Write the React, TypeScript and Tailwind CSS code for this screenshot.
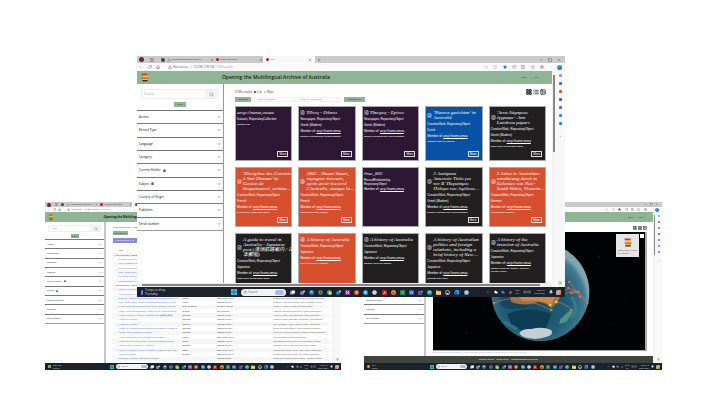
import React from "react";
import {
  ArrowLeft, RotateCw, Home, TriangleAlert, ChevronDown, Search, LayoutGrid, List, Image as ImageIcon,
  Settings, Star, BookOpen, Minus, Square, X, Plus, Columns2, ChevronUp, Cloud, Wifi, Volume2, Bell, FileText, Lock,
} from "lucide-react";

type Size = "lg" | "sm";

const filters = [
  "Access", "Record Type", "Language", "Category", "Current Holder", "Subject",
  "Country of Origin", "Publisher", "Serial number",
];

const taskApps: React.ReactNode[] = [
  <><rect x="0" y="3" width="7" height="6" fill="#9aa3ad" /><rect x="3" y="1" width="7" height="6" fill="#f1f3f5" /></>,
  <><circle cx="4" cy="6" r="4" fill="#7b83c9" /><circle cx="8" cy="3" r="2" fill="#dfe6ee" /></>,
  <><circle cx="5" cy="5" r="5" fill="#1f7fc4" /><path d="M2 5a3 3 0 0 1 6 0z" fill="#a6dcf2" /></>,
  <><circle cx="5" cy="5" r="4.5" fill="#808a92" /><circle cx="5" cy="5" r="2" fill="#333b43" /></>,
  <><circle cx="5" cy="5" r="5" fill="#43a85c" /><path d="M5 5L10 5A5 5 0 0 1 4 10z" fill="#efc342" /><circle cx="5" cy="5" r="2" fill="#d8e9f8" /></>,
  <><circle cx="4" cy="6" r="4" fill="#2a7fc0" /><circle cx="8" cy="3" r="2.5" fill="#9fc6a5" /></>,
  <><rect width="10" height="10" rx="1" fill="#8a35b5" /><path d="M3 8V2l4 6V2" stroke="#fff" fill="none" /></>,
  <><circle cx="5" cy="5" r="5" fill="#d65332" /><path d="M4 8V3h2a1 1 0 0 1 0 3H4" stroke="#fff" fill="none" /></>,
  <><circle cx="5" cy="5" r="5" fill="#1e9de0" /><path d="M7 3H4a1 1 0 0 0 0 2h2a1 1 0 0 1 0 2H3" stroke="#fff" fill="none" /></>,
  <><circle cx="5" cy="5" r="4.5" fill="#eceeec" /><circle cx="5" cy="5" r="2" fill="#a8b0ac" /></>,
  <><rect width="10" height="10" rx="1" fill="#c51616" /><path d="M2 8Q5 6 5 2Q5 6 8 7Q5 6 2 8" stroke="#fff" fill="none" /></>,
  <><circle cx="5" cy="5" r="5" fill="#f38a29" /><circle cx="5" cy="6" r="2.5" fill="#b5428d" /></>,
  <><rect width="10" height="10" rx="1" fill="#218650" /><path d="M3 3l4 4M7 3L3 7" stroke="#d9f2e3" /></>,
  <><rect width="10" height="10" rx="1" fill="#2463b5" /><path d="M2 3l1 4 2-4 2 4 1-4" stroke="#fff" fill="none" /></>,
  <><rect y="2" width="8" height="8" rx="1" fill="#4f59b5" /><circle cx="8" cy="3" r="2" fill="#8087d9" /></>,
  <><circle cx="5" cy="5" r="5" fill="#1b9fc9" /><path d="M1 7A5 5 0 0 1 9 3Q10 6 6 6z" fill="#5bd58c" /></>,
  <><path d="M0 1h4l1 1h5v7H0z" fill="#f1c445" /><rect y="6" width="10" height="3" fill="#f9dc7c" /></>,
  <><circle cx="5" cy="5" r="4" fill="none" stroke="#d8dde0" strokeWidth="1.5" /><path d="M3 9V6h4v3" fill="#d8dde0" /></>,
  <><rect x="2" width="8" height="9" rx="1" fill="#2d9ae5" /><rect y="3" width="6" height="6" fill="#1563b0" /></>,
  <><circle cx="5" cy="5" r="5" fill="#7fa2d8" /><circle cx="5" cy="5" r="2.5" fill="#c9d9f0" /></>,
];

function Flag({ className }: { className: string }) {
  return (
    <svg viewBox="0 0 12 14" className={className} aria-hidden="true">
      <path d="M1 1h9v3H1z" fill="#c63a24" /><path d="M2 4h9v3H2z" fill="#f3ce3c" />
      <path d="M1 7h10v2H1z" fill="#d2452b" /><path d="M2 9h9v2H2z" fill="#f1c232" /><path d="M2 11h8v2H2z" fill="#29251d" />
    </svg>
  );
}

function TabStrip({ size }: { size: Size }) {
  const lg = size === "lg";
  const icon = lg ? "size-1 shrink-0" : "size-[3px] shrink-0";
  return (
    <div className={`flex items-center bg-[#cbcbcb] text-[2px] text-[#444] ${lg ? "h-[7px]" : "h-[5px]"}`}>
      <div className="flex w-[6.5%] items-center justify-between pl-[2px]">
        <span className={`rounded-full bg-[#6d2730] ${lg ? "size-[5px]" : "size-[4px]"}`} />
        <Columns2 className={icon} /><Square className={icon} fill="#333" />
      </div>
      <div className="flex w-[11.5%] items-center gap-px pl-[2px]">
        <TriangleAlert className={icon} color="#d9583b" />
        <span className="flex-1 truncate">{lg ? "transforming-workspc-staging-c…" : "transforming-workspc-st…"}</span><X className={icon} />
      </div>
      <div className="flex w-[11.5%] items-center gap-px pl-[2px]">
        <span className="size-[3px] shrink-0 rounded-full bg-[#a81e38]" />
        <span className="flex-1 truncate">Systemik Solutions</span><X className={icon} />
      </div>
      <div className="flex h-full w-[12%] items-center gap-[2px] bg-[#f8f8f8] px-[3px]">
        <span className="size-[3px] shrink-0 rounded-full bg-[#a81e38]" />
        <span className="flex-1">Dev</span><X className={icon} />
      </div>
      <Plus className={`ml-[2px] ${icon}`} />
      <div className="ml-auto flex w-[6%] items-center justify-between pr-[4px]">
        <Minus className={icon} /><Square className={icon} /><X className={icon} />
      </div>
    </div>
  );
}

function AddressBar({ size }: { size: Size }) {
  const lg = size === "lg";
  const icon = lg ? "size-1 shrink-0" : "size-[3px] shrink-0";
  return (
    <div className={`flex items-center bg-[#fafafa] text-[#555] ${lg ? "h-[8px] text-[3px]" : "h-[5px] text-[2px]"}`}>
      <div className="flex w-[5.5%] items-center justify-between pl-[2px]">
        <ArrowLeft className={icon} color="#bbb" /><RotateCw className={icon} /><Home className={icon} />
      </div>
      <TriangleAlert className={`${lg ? "ml-[8px]" : "ml-[6px]"} ${icon}`} />
      <span className="ml-px whitespace-nowrap text-[#555]">Not secure &nbsp;|&nbsp; 13.236.178.162<span className="text-[#999]">:1100/search</span></span>
      <div className="ml-auto flex w-[19%] items-center justify-between pr-[3px]">
        <Search className={icon} color="#aaa" /><BookOpen className={icon} color="#aaa" />
        <Star className={icon} fill="#1477d4" color="#1477d4" />
        <RotateCw className={icon} /><Columns2 className={icon} /><Star className={icon} /><Settings className={icon} />
        <span>···</span>
        <span className={`rounded-full bg-gradient-to-br from-[#39b8ee] to-[#2360cc] ${lg ? "size-[5px]" : "size-[4px]"}`} />
      </div>
    </div>
  );
}

function Banner({ size }: { size: Size }) {
  const lg = size === "lg";
  return (
    <header className={`flex shrink-0 items-center justify-between bg-[#8fb595] ${lg ? "h-[13px]" : "h-[10px]"}`}>
      <div className="w-[20.5%]"><Flag className={lg ? "ml-[4px] h-[9px] w-[8px]" : "ml-[3px] h-[6px] w-[6px]"} /></div>
      <h1 className={`flex-1 whitespace-nowrap text-[#18231a] ${lg ? "text-[5px] font-semibold" : "text-[3px] font-bold"}`}>
        Opening the Multilingual Archive of Australia
      </h1>
      <nav className={`flex text-[2px] text-[#26382a] ${lg ? "gap-[7px] pr-[11px]" : "gap-[5px] pr-[8px]"}`}>
        <a href="#login">Login</a>
        <a href="#help" className="flex items-center gap-px">Help <ChevronDown className="size-[2px]" /></a>
      </nav>
    </header>
  );
}

function Sidebar({ size }: { size: Size }) {
  const lg = size === "lg";
  return (
    <aside className={`flex shrink-0 flex-col bg-white ${lg ? "w-[21%] border-r border-[#999] pt-[5px]" : "w-[21.3%] border-r-2 border-[#c6c6c6] pt-[3px]"}`}>
      <form className="flex flex-col items-center">
        <div className={`flex w-[90%] items-stretch border border-[#eceff3] ${lg ? "h-[10px]" : "h-[7px]"}`}>
          <input aria-label="Search" placeholder="Search…" className={`min-w-0 flex-1 bg-white px-[2px] placeholder:text-[#a5a5a5] ${lg ? "text-[3px]" : "text-[2px]"}`} />
          <button type="button" aria-label="Run search" className={`flex items-center justify-center bg-[#f2f4f9] ${lg ? "w-[13px]" : "w-[9px]"}`}>
            <Search className={lg ? "size-[5px]" : "size-[4px]"} color="#75808e" />
          </button>
        </div>
        <button type="reset" className={`flex items-center justify-center bg-[#8fb595] text-[2px] text-[#25352a] ${lg ? "mt-[3px] h-[5px] w-[12px]" : "mt-[2px] h-[4px] w-[8px]"}`}>Reset</button>
      </form>
      <div className={`grid grid-rows-9 border-b border-[#999] ${lg ? "mt-[3px] h-[121px] text-[3px]" : "mt-px h-[85px] text-[2px]"}`}>
        {filters.map((f, i) => (
          <button key={f} type="button" className="flex min-h-0 items-center justify-between border-t border-[#777] px-[2px] font-semibold text-[#4a505a]">
            <span className="flex items-center gap-[2px]">{f}{(i === 4 || i === 5) && <Lock className={lg ? "size-[3px]" : "size-[2px]"} fill="#333" />}</span>
            <ChevronDown className={lg ? "size-[4px]" : "size-[3px]"} strokeWidth={3} />
          </button>
        ))}
      </div>
    </aside>
  );
}

const railColors = ["bg-[#9aa0a8]", "bg-[#3a6fd0]", "bg-[#d35b2e]", "bg-[#6b4ea8]", "bg-[#6b62c6]", "bg-[#2492da]", "bg-[#2c8bd0]"];

function Rail({ size }: { size: Size }) {
  const lg = size === "lg";
  return (
    <div className={`flex shrink-0 flex-col items-center bg-[#f7f7f7] ${lg ? "w-[10px] gap-[5px] pt-[3px]" : "w-[7px] gap-[4px] pt-[3px]"}`}>
      {railColors.map((c) => <span key={c} className={`rounded-[1px] ${c} ${lg ? "size-[3px]" : "size-[2px]"}`} />)}
      <Plus className={lg ? "mt-[5px] size-[3px]" : "mt-[3px] size-[2px]"} color="#999" />
      <Settings className={`mt-auto mb-[2px] ${lg ? "size-[4px]" : "size-[3px]"}`} color="#777" />
    </div>
  );
}

function Taskbar({ size, weather }: { size: Size; weather: React.ReactNode }) {
  const lg = size === "lg";
  const icon = lg ? "size-[6px] shrink-0" : "size-[4px] shrink-0";
  const tray = lg ? "size-[4px] shrink-0" : "size-[3px] shrink-0";
  return (
    <div className={`flex shrink-0 items-center bg-[#1b222c] text-[#d9dde2] ${lg ? "h-[10px] text-[3px] leading-[4px]" : "h-[7px] text-[2px] leading-[3px]"}`}>
      <div className={`flex w-[22%] items-center gap-[2px] ${lg ? "pl-[4px]" : "pl-[3px]"}`}>{weather}</div>
      <div className="flex w-[55.5%] items-center justify-between">
        <svg viewBox="0 0 10 10" className={icon}><path d="M0 0h4.6v4.6H0zM5.4 0H10v4.6H5.4zM0 5.4h4.6V10H0zM5.4 5.4H10V10H5.4z" fill="#45bdf0" /></svg>
        <label className={`flex w-[19%] items-center rounded-full bg-[#f0f3f5] text-[#555] ${lg ? "h-[7px] px-[2px]" : "h-[5px] px-px"}`}>
          <Search className={tray} />
          <input aria-label="Search the desktop" placeholder="Search" className="ml-px min-w-0 flex-1 bg-transparent placeholder:text-[#666]" />
          <span className={`rounded-full bg-[#aab8ee] ${lg ? "h-[5px] w-[9px]" : "h-[3px] w-[6px]"}`} />
        </label>
        {taskApps.map((app, i) => <svg key={i} viewBox="0 0 10 10" className={lg ? "size-[5px] shrink-0" : icon}>{app}</svg>)}
      </div>
      <div className={`ml-auto flex w-[18.5%] items-center justify-between ${lg ? "pr-[4px]" : "pr-[2px]"}`}>
        <ChevronUp className={tray} />
        <Cloud className={tray} fill="#fff" /><Cloud className={tray} fill="#2491e8" color="#2491e8" />
        <span className={`rounded-[1px] bg-[#d62f3c] ${lg ? "size-[3px]" : "size-[2px]"}`} />
        <span className="text-center text-[2px] leading-[3px]">ENG<br />US</span>
        <span className="flex"><Wifi className={tray} /><Volume2 className={tray} /></span>
        <span className="text-right text-[2px] leading-[3px]">10:03 AM<br />23/04/2024</span>
        <Bell className={tray} fill="#ddd" />
        <span className={`rounded-[1px] bg-gradient-to-br from-[#3694f2] via-[#e3b23c] to-[#d2429d] ${lg ? "size-[5px]" : "size-[4px]"}`} />
      </div>
    </div>
  );
}

function ViewSwitch({ size, active }: { size: Size; active: number }) {
  const lg = size === "lg";
  return (
    <div className="flex gap-px text-[#222]">
      {[LayoutGrid, List, ImageIcon].map((Icon, i) => (
        <button key={i} type="button" aria-label={["Grid view", "List view", "Map view"][i]} className={i === active ? "bg-[#86bfe8]" : "bg-white"}>
          <Icon className={lg ? "size-[6px]" : "size-[4px]"} strokeWidth={3} />
        </button>
      ))}
    </div>
  );
}

type Tone = "purple" | "blue" | "black" | "red";
const tones: Record<Tone, string> = { purple: "bg-[#2d1734]", blue: "bg-[#0752a5]", black: "bg-[#211f20]", red: "bg-[#d6502f]" };
type CardData = { tone: Tone; title: string; icon?: boolean; kind: string; lang?: string; member?: boolean; lib?: string };
const CW = "CreativeWork, RepositoryObject";
const NP = "Newspaper, RepositoryObject";
const cards: CardData[] = [
  { tone: "purple", title: "arcp://name,omaa", kind: "Dataset, RepositoryCollection", lib: "Objects: 2185" },
  { tone: "purple", icon: true, title: "Έθνος - Ethnos", kind: NP, lang: "Greek (Modern)", member: true, lib: "Dardalis Archives of the Hellenic Diaspora" },
  { tone: "purple", icon: true, title: "Ήπειρος - Epiros", kind: NP, lang: "Greek (Modern)", member: true, lib: "Dardalis Archives of the Hellenic Diaspora" },
  { tone: "blue", icon: true, title: "'Nieuwe gezichten' in\nAustralië", kind: CW, lang: "Dutch", member: true, lib: "National Library of Australia" },
  { tone: "black", icon: true, title: "'Αννα Λάμπρου:\nέγγραφα - Ann\nLambrou papers", kind: CW, lang: "Greek (Modern)", member: true, lib: "State Library of New South Wales" },
  { tone: "red", icon: true, title: "'Discipline des Convicts\nà Van-Diemen' by\nGaston de\nRoquemaurel, written…", kind: CW, lang: "French", member: true, lib: "State Library of New South Wales" },
  { tone: "red", icon: true, title: "1862 – Douai Stuart,\nvoyageur écossais,\naprès avoir traversé\nl'Australie, marque la…", kind: CW, lang: "French", member: true, lib: "National Library of Australia" },
  { tone: "purple", title: "#rec_892", kind: "RecordRelationship,\nRepositoryObject", member: true },
  { tone: "black", icon: true, title: "2 Αυτόματα\nΑπαιτούν Τίτλο για\nτον Β' Παγκόσμιο\nΠόλεμο του Αιμίλιου…", kind: CW, lang: "Greek (Modern)", member: true, lib: "Dardalis Archives of the Hellenic Diaspora" },
  { tone: "red", icon: true, title: "3 Jahre in Australien:\nwanderung durch in\nKolonien von New-\nSouth-Wales, Victoria…", kind: CW, lang: "German", member: true, lib: "The University of Sydney" },
  { tone: "black", icon: true, title: "A guide to travel in\nAustralia - Japanese\npost (濠洲航路案内 / 日\n本郵船)", kind: CW, lang: "Japanese", member: true, lib: "State Library of New South Wales" },
  { tone: "red", icon: true, title: "A history of Australia", kind: CW, lang: "Japanese", member: true, lib: "National Library of Australia" },
  { tone: "black", icon: true, title: "A history of Australia", kind: CW, lang: "Japanese", member: true, lib: "National Library of Australia" },
  { tone: "black", icon: true, title: "A history of Australian\npolitics and foreign\nrelations, including a\nbrief history of New…", kind: CW, lang: "Japanese", member: true, lib: "Japanese Diet Library" },
  { tone: "black", icon: true, title: "A history of the\ninvasion of Australia", kind: CW, lang: "Japanese", member: true, lib: "National Library of Australia - Northern\nTerritory Library" },
];

function Card({ card, more }: { card: CardData; more: boolean }) {
  return (
    <article className={`relative min-w-0 border border-[#aaa] pt-[3px] pl-px text-white ${tones[card.tone]}`}>
      <div className="mb-px flex items-center gap-px">
        {card.icon && <FileText className="size-[5px] shrink-0" />}
        <h2 className="font-['Liberation_Serif','Noto_Sans_CJK_JP',serif] text-[5px] leading-[5px] whitespace-pre italic">{card.title}</h2>
      </div>
      <div className="font-['Liberation_Sans',Arial,sans-serif] text-[3px] leading-[6px]">
        <p className={card.lang || !card.member ? "" : "pt-px leading-[4px] whitespace-pre-line"}>{card.kind}</p>
        {card.lang && <p>{card.lang}</p>}
        {card.member && <p>Member of: <a href="#arcp" className="underline">arcp://name,omaa</a></p>}
        {card.lib && <p className="pt-px font-['Open_Sans',sans-serif] text-[2px] leading-[3px] font-semibold whitespace-pre-line">{card.lib}</p>}
      </div>
      {more && (
        <button type="button" className="absolute right-[3px] bottom-[3px] flex h-[6px] w-[11px] items-center justify-center border border-[#ddd] font-['Liberation_Sans',sans-serif] text-[3px]">More</button>
      )}
    </article>
  );
}

function Desktop({ className, size, label, weather, children, footer }: {
  className: string; size: Size; label: string; weather: React.ReactNode; children: React.ReactNode; footer?: React.ReactNode;
}) {
  const lg = size === "lg";
  return (
    <section aria-label={label} className={`absolute flex flex-col overflow-hidden bg-white ${className}`}>
      <TabStrip size={size} />
      <AddressBar size={size} />
      <div className="flex min-h-0 flex-1">
        <div className="flex min-w-0 flex-1 flex-col">
          <Banner size={size} />
          <div className="flex min-h-0 flex-1"><Sidebar size={size} />{children}</div>
          {footer}
        </div>
        <div className={`shrink-0 bg-[#f3f3f3] ${lg ? "w-[3px] pt-[4px]" : "w-[2px] pt-[3px]"}`}>
          <div className={`ml-px bg-[#888] ${lg ? "h-[77px]" : "h-[40px]"}`} />
        </div>
        <Rail size={size} />
      </div>
      <Taskbar size={size} weather={weather} />
    </section>
  );
}

function Results() {
  return (
    <main className="flex min-w-0 flex-1 flex-col overflow-hidden pt-[5px] pr-[6px] pl-[11px]">
      <div className="flex h-[7px] items-center justify-between text-[3px] leading-[4px] text-[#333]">
        <div className="flex items-center gap-[2px]">
          <span>2186 results</span>
          <label className="flex items-center gap-px"><input type="radio" name="mode" defaultChecked className="size-[2px] appearance-none rounded-full bg-[#333]" />List</label>
          <label className="flex items-center gap-px"><input type="radio" name="mode" className="size-[2px] appearance-none rounded-full border border-[#aaa]" />Map</label>
        </div>
        <ViewSwitch size="lg" active={0} />
      </div>
      <div className="mt-[2px] mb-[4px] flex h-[5px] items-stretch gap-[3px] text-[2px]">
        <button type="button" className="w-[16px] bg-[#8fb595] text-[#223026]">Reset sort</button>
        <div className="flex w-[41px] items-center border border-[#f2f2f2]">
          <select aria-label="Sort by" className="min-w-0 flex-1 appearance-none px-[3px] text-[#777]"><option>Sort by: Relevance</option></select>
          <ChevronDown className="size-[3px]" color="#aaa" />
        </div>
        <div className="flex w-[43px] items-center border border-[#f2f2f2]">
          <select aria-label="Order by" className="min-w-0 flex-1 appearance-none px-[2px] text-[#777]"><option>Order by: Descending</option></select>
          <ChevronDown className="size-[3px]" color="#aaa" />
        </div>
        <button type="button" className="w-[21px] bg-[#8fb595] text-[#223026]">Download CSV</button>
      </div>
      <div className="grid grid-cols-5 grid-rows-[55px_60px_60px] gap-x-[6px] gap-y-[6px]">
        {cards.map((c, i) => <Card key={i} card={c} more={i < 10 && i !== 7} />)}
      </div>
    </main>
  );
}

const rows: [string, string, string, string][] = [
  ["Top Collection (Abstract Material)", "", "", ""],
  ["'Nieuwe gezichten' in Australië", "Dutch", "National Library…", "Migrants; immigration; Dutch in Australia"],
  ["'Αννα Λάμπρου έγγραφα - Ann Lambrou", "Greek", "State Library of N…", "Papers; family history"],
  ["'Discipline des Convicts à Van-Diemen'", "French", "State Library of N…", "Convicts; Tasmania; voyages"],
  ["1862 – Douai Stuart, voyageur écossais", "French", "National Library…", "Explorers; expeditions; Australia"],
  ["2 Αυτόματα Απαιτούν Τίτλο για τον", "Greek", "Dardalis Archives", "World War; prisoners"],
  ["Abbott's history of Melbourne", "", "", ""],
  ["Top Collection (Abstract Material)", "", "", ""],
  ["3 Jahre in Australien: wanderung durch", "German", "The University of…", "Travel; emigration"],
  ["A guide to travel in Australia - Japanese", "Japanese", "State Library of N…", "Shipping; travel guides"],
  ["Abrégé de l'histoire générale des voyages, contenant ce qu'il y a…", "French", "State Library of N…", "Voyages and travels; Pacific Ocean; explorers; maritime…"],
  ["1862 – Stuart, Douai; à travers le continent australien, récit du…", "French", "National Library…", "Explorers; Australia discovery and exploration; travel"],
  ["L'Australie souvenirs, histoire de la colonie anglaise, avec des…", "Greek (Modern)", "Dardalis Archives", "Greeks in Australia; Greek language history"],
  ["A short Australian commentary history of the Australian States…", "German", "The University…", "Australia description and travel; Victoria gold mines…"],
  ["A guide to travel in Australia - Japanese post (濠洲航路案内)", "Japanese", "National Library…", "Australia history; commonwealth travel; Economic…"],
  ["A history of Australia", "Japanese", "National Library…", "Australia history; Economic; geography; development"],
  ["A history of Australia", "Japanese", "National Library…", "World economy; Japan; conflict; history; Governors"],
  ["A history of Australian politics and foreign relations, including a…", "Japanese", "National Library…", "Politics and government; Australia foreign relations"],
  ["A history of the invasion of Australia", "Japanese", "National Library…", "Aboriginal Australian peoples; discovery and exploration"],
  ["A letter from Sydney to Paris, collection and notes", "French", "State Library of N…", "New Caledonia; French colonisation"],
  ["A narrative of the loss of ships, a personal account of history", "French", "National Library…", "International trade; agricultural economics; industry"],
  ["A portrait of an Australian in Antarctica", "Japanese", "National Library…", "Antarctica; polar expeditions and travel; history"],
  ["A travers l'Australie; Abrégé de l'histoire, voyages de l'Est, 1870…", "Italian", "State Library of N…", "Voyages and travels; Pacific 1800-1850; Photographs"],
  ["A travers l'Australie", "German", "State Library of N…", "Voyages; agriculture; social life; Politics; Governors"],
  ["Aborigines, Relations; Report of the Mission", "", "National Library…", "Immigrants; mission; Benedictines; Australia; schools"],
];

function DataTable() {
  return (
    <main className="flex min-w-0 flex-1 flex-col overflow-hidden pt-[3px] pr-[3px] pl-[7px] text-[2px] leading-[3px] text-[#333]">
      <div className="flex h-[5px] items-center justify-between"><span>2186 results &nbsp;● List &nbsp;○ Map</span><ViewSwitch size="sm" active={1} /></div>
      <button type="button" className="mt-px h-[4px] w-[15px] shrink-0 bg-[#8fb595]">Download CSV</button>
      <div className="mt-[3px] flex h-[5px] shrink-0 items-center bg-[#878bd2] pl-[3px] text-white">Type: Object ▾ All ▾</div>
      <table className="block">
        <thead className="block"><tr className="grid h-[10px] grid-cols-[32%_16%_26%_26%] items-end pb-px text-left">
          <th className="pl-[6px] font-normal">Title</th><th className="font-normal">Language</th><th className="font-normal">Holder</th><th className="font-normal">Subject</th>
        </tr></thead>
        <tbody className="grid h-[108px] grid-rows-[repeat(25,minmax(0,1fr))]">
          {rows.map((r, i) => (
            <tr key={i} className="grid min-h-0 grid-cols-[32%_16%_26%_26%] items-center odd:bg-[#f6f6f6]">
              {i === 0 || i === 7 ? (
                <td className="col-span-4 pl-px whitespace-nowrap">▪ &nbsp;{r[0]}</td>
              ) : (
                <>
                  <td className="truncate pr-[2px] pl-[5px]"><a href="#record" className="text-[#3d6ed8] underline">{r[0]}</a></td>
                  <td className="truncate">{r[1]}</td><td className="truncate">{r[2]}</td><td className="truncate text-[#555]">{r[3]}</td>
                </>
              )}
            </tr>
          ))}
        </tbody>
      </table>
    </main>
  );
}

const places: [number, number, string][] = [
  [135, 56, "#ef6b4b"], [138, 61, "#ef6b4b"], [145, 60, "#ef6b4b"], [147, 65, "#ef6b4b"], [154, 71, "#ef6b4b"],
  [138, 78, "#ef6b4b"], [118, 78, "#ef6b4b"], [123, 70, "#ffd23e"], [117, 73, "#ffd23e"], [61, 71, "#ef6b4b"], [136, 50, "#ef6b4b"],
];

function Globe() {
  return (
    <svg viewBox="0 0 212 118" preserveAspectRatio="xMidYMid slice" className="block h-full w-full" role="img" aria-label="Globe with record locations">
      <defs>
        <radialGradient id="sea" cx=".45" cy=".6" r=".55"><stop offset="0" stopColor="#164d64" /><stop offset=".65" stopColor="#235e76" /><stop offset=".92" stopColor="#427c91" /><stop offset="1" stopColor="#81a6ae" /></radialGradient>
        <clipPath id="ball"><circle cx="107" cy="60" r="49" /></clipPath>
      </defs>
      <rect width="212" height="118" fill="#010204" />
      <circle cx="107" cy="60" r="49" fill="url(#sea)" />
      <g clipPath="url(#ball)">
        <path d="M74 82Q95 73 118 82L112 98Q90 102 78 93z" fill="#0d3d55" />
        <path d="M67 66Q90 62 98 72Q88 80 68 75z" fill="#123f56" opacity=".7" />
        <path d="M76 60Q105 50 128 60Q127 69 118 76Q112 70 105 70Q92 75 78 70z" fill="#9b7147" />
        <path d="M84 64Q106 58 122 65L117 73Q108 67 90 69z" fill="#cd8a44" />
        <path d="M127 87L137 78L140 80L133 90L126 92z" fill="#4a9488" />
        <path d="M71 90Q78 93 84 97M138 65Q147 77 138 86" stroke="#3e8790" strokeWidth="3" fill="none" opacity=".6" />
        <path d="M86 101Q90 96 98 97Q109 94 118 98Q121 103 113 105Q104 108 94 106Q88 105 86 101z" fill="#c5cdd4" />
        <path d="M62 30Q90 15 130 26" stroke="#437f83" strokeWidth="8" fill="none" opacity=".5" />
      </g>
      <path d="M61 71Q82 60 118 78M117 73Q130 57 145 60L154 71M123 70Q132 71 138 78M135 56L145 60L138 61M135 56Q126 62 123 70M136 50L147 65" fill="none" stroke="#d77d50" strokeWidth=".6" />
      {places.map(([x, y, c]) => <circle key={`${x}-${y}`} cx={x} cy={y} r="1.2" fill={c} />)}
      <g fill="#46535c"><circle cx="33" cy="101" r=".5" /><circle cx="166" cy="24" r=".5" /><circle cx="180" cy="91" r=".4" /><circle cx="192" cy="70" r=".4" /></g>
    </svg>
  );
}

function MapView() {
  return (
    <main className="flex min-w-0 flex-1 flex-col pt-[3px] pr-[6px] pl-[7px] text-[2px] leading-[3px]">
      <div className="flex h-[5px] items-center justify-between"><span>2186 results</span><ViewSwitch size="sm" active={1} /></div>
      <div className="relative mt-[2px] min-h-0 flex-1 border-r-2 border-b border-[#aaa]">
        <Globe />
        <div className="absolute top-[2px] right-[6px] flex h-[23px] w-[23px] flex-col items-center bg-[#e5e5e5] pt-[3px] text-[#444]">
          <Flag className="h-[11px] w-[8px]" />
          <p className="mt-px w-full pl-[2px]">Opening the Archive<br />of Australia</p>
        </div>
        <button type="button" aria-label="Close details" className="absolute top-[2px] right-px size-[4px] bg-white" />
      </div>
      <p className="h-[5px] overflow-hidden whitespace-nowrap text-[#aaa]">Data attribution: Earth imagery, terrain, boundaries and records by contributing libraries and archives</p>
    </main>
  );
}

export default function App() {
  return (
    <div className="relative h-screen min-h-[405px] w-full overflow-hidden bg-white font-['Open_Sans','Noto_Sans',sans-serif]">
      <Desktop label="Table view" size="sm" className="top-[202px] left-[6.25%] h-[168px] w-[41.1%]"
        weather={<><span className="size-[3px] bg-[#76b82a]" /><span>Rain later<br />Sunday</span></>}>
        <DataTable />
      </Desktop>
      <Desktop label="Map view" size="sm" className="top-[202px] left-[50.55%] h-[168px] w-[41.4%]"
        weather={<><span className="size-[3px] rounded-full bg-[#f39b20]" /><span>20°C<br />Sunny</span></>}
        footer={
          <footer className="flex h-[7px] shrink-0 items-center justify-center gap-[2px] bg-[#40443f] text-[2px] text-white">
            <a href="#terms">Terms of Service</a><a href="#privacy">Privacy Policy</a><a href="#country">Acknowledgement of Country</a>
          </footer>
        }>
        <MapView />
      </Desktop>
      <Desktop label="Card view" size="lg" className="top-[56px] left-[19%] h-[241px] w-[59.5%]"
        weather={<><span className="h-[5px] w-[2px] rounded-full bg-[#4c8fe0]" /><span>Temps to drop<br />Thursday</span></>}
        footer={<div className="flex h-[4px] shrink-0 items-center bg-[#eee] pr-[12px] pl-[5px]"><div className="h-[2px] flex-1 bg-[#858585]" /></div>}>
        <Results />
      </Desktop>
    </div>
  );
}
